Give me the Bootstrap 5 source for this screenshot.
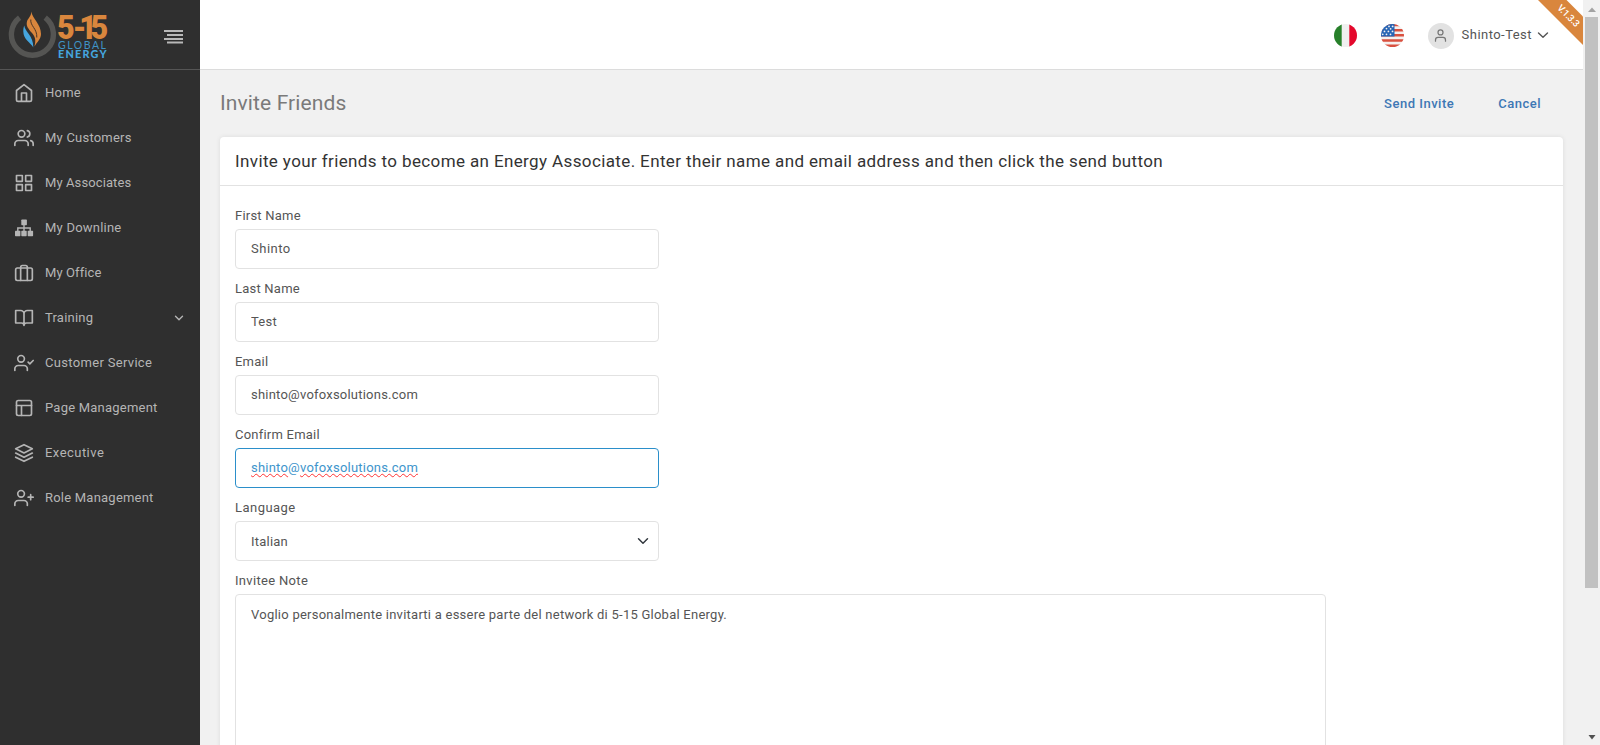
<!DOCTYPE html>
<html lang="en">
<head>
<meta charset="utf-8">
<meta name="viewport" content="width=device-width, initial-scale=1">
<title>Invite Friends</title>
<link href="https://cdn.jsdelivr.net/npm/bootstrap@5.3.0/dist/css/bootstrap.min.css" rel="stylesheet">
<script src="https://cdn.jsdelivr.net/npm/bootstrap@5.3.0/dist/js/bootstrap.bundle.min.js"></script>
<style>
body{height:745px;overflow:hidden;background:#f1f1f1;font-family:Roboto,"Open Sans",sans-serif;font-size:13px;line-height:20px;color:#555;letter-spacing:.22px}
.ls-1{letter-spacing:.1px}
.ls-3{letter-spacing:.32px}
.ls-5{letter-spacing:.46px}
.ic{fill:none;stroke:currentColor;stroke-width:2;stroke-linecap:round;stroke-linejoin:round;flex:none}
.ic-thin{stroke-width:1.4}

/* sidebar */
.sidebar{width:200px;background:#2f2f2f}
.brand-bar{height:70px;border-bottom:1px solid #555;padding:5px 16px 0 8px;color:#b8b8b8}
.burger{margin-top:20px}
.side-link{height:45px;padding:0 15px 0 14px;color:#b5b5b5;gap:11px}
.side-link:hover{color:#fff}

/* top bar */
.topbar{height:70px;background:#fff;border-bottom:1px solid #dcdcdc;padding-right:33px}
.flag,.avatar-dot{margin-top:2px}
.avatar-dot{width:26px;height:26px;background:#e2e2e2;color:#777}
.ribbon{right:0;top:0;display:block}

/* page */
.page-head{height:67px;padding:0 42px 0 20px}
.page-name{font-size:21px;line-height:26px;color:#7a7a7a;letter-spacing:.12px;font-weight:400;padding-bottom:2px}
.act{color:#3e78b5;font-weight:500;letter-spacing:.5px;padding:0;font-size:13px;border:0}
.act-group{gap:44px}
.panel{border:0;border-radius:4px 4px 0 0;box-shadow:0 0 5px rgba(0,0,0,.09);margin:0 20px}
.panel-title{height:49px;border-bottom:1px solid #e2e2e2;padding:1px 15px 0;font-size:17px;color:#333;letter-spacing:.38px;font-weight:400}
.panel-form{padding:20px 15px}
.field{width:424px;height:73px}
.form-label{display:block;height:20px;margin:0 0 3px;line-height:20px}
.form-control,.form-select{font-size:13px;line-height:20px;height:40px;border:1px solid #e2e2e2;border-radius:4px;padding:8px 15px 10px;color:#555;box-shadow:none;letter-spacing:inherit}
.form-select{background-position:right 9px center;background-size:12px 12px;padding:10px 15px 8px}
.form-control.wide{letter-spacing:.5px}
.field-live,.field-live:focus{border-color:#2b8fca;color:#3e95cc;padding-top:9px}
.typo{text-decoration:underline wavy #f33;text-decoration-thickness:1px;text-underline-offset:1px;text-decoration-skip-ink:none}
.form-control.note{width:1091px;height:300px;resize:none;padding-top:10px;letter-spacing:.245px}

/* scroll bar */
.scroller{width:17px;background:#f1f1f1;padding:7px 0 5px}
.thumb{height:571px;width:13px;background:#c1c1c1;margin:5px 0 auto}
</style>
</head>
<body>
<div class="d-flex w-100 h-100">

<aside class="sidebar d-flex flex-column flex-shrink-0">
  <div class="brand-bar d-flex justify-content-between align-items-start">
    <svg width="106" height="58" viewBox="8 5 106 58">
      <path d="M19.6 17.6A21 21 0 1 0 45.2 17.6" fill="none" stroke="#555553" stroke-width="5.4"/>
      <path d="M31.3 11.5C32.5 19 41 24 41 34C41 39 37 42 34.5 46.5C36 40 35.5 37.5 32 33C28 28.5 26.3 26 26.8 22.5C27.3 18.500 31.3 17 31.3 11.5Z" fill="#d9863d"/>
      <path d="M24.2 25.5C25 32 33.5 35.5 33.3 47.5C31 43 23.3 39.5 23.3 31.5C23.3 29 23.5 27.5 24.2 25.5Z" fill="#45a5de"/>
      <path d="M30.8 19.5C30 26 37.3 28.5 36.8 37.5" fill="none" stroke="#4a3424" stroke-width="1"/>
      <text transform="translate(57 38.8) scale(.9 1)" x="0 17.5 24.6 37.2" y="0" font-weight="900" font-size="34" letter-spacing="0" fill="#d9863d">5-15</text>
      <text x="58" y="48.500" font-family="Lato,sans-serif" font-size="10.5" letter-spacing="0" textLength="48" fill="#3f93c6">GLOBAL</text>
      <text x="58" y="57.800" font-family="Lato,sans-serif" font-weight="900" font-size="10.8" letter-spacing="0" textLength="48.5" fill="#45a5de">ENERGY</text>
    </svg>
    <svg class="burger" width="20" height="24" viewBox="165 25 20 24" fill="currentColor"><path d="M165 30h19v2h-19zM168 34h16v2h-16zM165 38h19v2h-19zM168 41.500h16v2h-16z"/></svg>
  </div>
  <nav class="nav flex-column flex-nowrap">
    <a class="side-link d-flex align-items-center text-decoration-none" href="#"><svg class="ic" width="20" height="20" viewBox="0 0 24 24"><path d="M3 9l9-7 9 7v11a2 2 0 0 1-2 2H5a2 2 0 0 1-2-2zM9 22V12h6v10"/></svg><span>Home</span></a>
    <a class="side-link d-flex align-items-center text-decoration-none" href="#"><svg class="ic" width="20" height="20" viewBox="0 0 24 24"><path d="M17 21v-2a4 4 0 0 0-4-4H5a4 4 0 0 0-4 4v2M23 21v-2a4 4 0 0 0-3-3.870M16 3.130a4 4 0 0 1 0 7.750"/><circle cx="9" cy="7" r="4"/></svg><span>My Customers</span></a>
    <a class="side-link d-flex align-items-center text-decoration-none" href="#"><svg class="ic" width="20" height="20" viewBox="0 0 24 24"><path d="M3 3h7v7H3zM14 3h7v7h-7zM14 14h7v7h-7zM3 14h7v7H3z"/></svg><span class="ls-1">My Associates</span></a>
    <a class="side-link d-flex align-items-center text-decoration-none" href="#"><svg width="20" height="20" viewBox="0 0 20 20" fill="currentColor"><path d="M9.300 5h1.400v10H9.300zM3.100 9.300h13.800v1.400H3.100zM3.100 9.300h1.400V14H3.100zM15.500 9.300h1.400V14h-1.400z"/><rect x="7.300" y="1.500" width="5.600" height="5.700" rx=".7"/><rect x="1" y="12.800" width="5.400" height="5.400" rx=".7"/><rect x="7.300" y="12.800" width="5.400" height="5.400" rx=".7"/><rect x="13.700" y="12.800" width="5.400" height="5.400" rx=".7"/></svg><span>My Downline</span></a>
    <a class="side-link d-flex align-items-center text-decoration-none" href="#"><svg class="ic" width="20" height="20" viewBox="0 0 24 24"><rect x="2" y="6" width="20" height="15" rx="2"/><path d="M16 21V5a2 2 0 0 0-2-2h-4a2 2 0 0 0-2 2v16"/></svg><span class="ls-1">My Office</span></a>
    <a class="side-link d-flex align-items-center text-decoration-none" href="#"><svg class="ic" width="20" height="20" viewBox="0 0 24 24"><path d="M2 3h6a4 4 0 0 1 4 4v14a3 3 0 0 0-3-3H2zM22 3h-6a4 4 0 0 0-4 4v14a3 3 0 0 1 3-3h7z"/></svg><span>Training</span><svg class="ic ic-thin ms-auto" width="12" height="12" viewBox="0 0 12 12"><path d="M2.500 4.200L6 7.700l3.500-3.500"/></svg></a>
    <a class="side-link d-flex align-items-center text-decoration-none" href="#"><svg class="ic" width="20" height="20" viewBox="0 0 24 24"><path d="M16 21v-2a4 4 0 0 0-4-4H5a4 4 0 0 0-4 4v2M17 11l2 2 4-4"/><circle cx="8.500" cy="7" r="4"/></svg><span class="ls-3">Customer Service</span></a>
    <a class="side-link d-flex align-items-center text-decoration-none" href="#"><svg class="ic" width="20" height="20" viewBox="0 0 24 24"><rect x="3" y="3" width="18" height="18" rx="2"/><path d="M3 9h18M9 21V9"/></svg><span>Page Management</span></a>
    <a class="side-link d-flex align-items-center text-decoration-none" href="#"><svg class="ic" width="20" height="20" viewBox="0 0 24 24"><path d="M12 2L2 7l10 5 10-5zM2 17l10 5 10-5M2 12l10 5 10-5"/></svg><span class="ls-5">Executive</span></a>
    <a class="side-link d-flex align-items-center text-decoration-none" href="#"><svg class="ic" width="20" height="20" viewBox="0 0 24 24"><path d="M16 21v-2a4 4 0 0 0-4-4H5a4 4 0 0 0-4 4v2M20 8v6M23 11h-6"/><circle cx="8.500" cy="7" r="4"/></svg><span>Role Management</span></a>
  </nav>
</aside>

<main class="flex-grow-1 d-flex flex-column position-relative overflow-hidden">
  <header class="topbar d-flex align-items-center justify-content-end flex-shrink-0">
    <svg class="flag me-4" width="23" height="23" viewBox="0 0 23 23"><defs><clipPath id="disc"><circle cx="11.500" cy="11.500" r="11.500"/></clipPath></defs><g clip-path="url(#disc)"><path fill="#f0f0f0" d="M0 0h23v23H0z"/><path fill="#27802a" d="M0 0h7.700v23H0z"/><path fill="#e4082c" d="M15.300 0H23v23h-7.700z"/></g></svg>
    <svg class="flag me-4" width="23" height="23" viewBox="0 0 23 23"><g clip-path="url(#disc)"><path fill="#f5f0ef" d="M0 0h23v23H0z"/><path fill="#d9503f" d="M0 0h23v2.300H0zM0 5h23v2.400H0zM0 10h23v2.500H0zM0 15.200h23v2.500H0zM0 20.400h23V23H0z"/><path fill="#2765b5" d="M0 0h13.500v12.400H0z"/><g fill="#f5f0ef"><circle cx="8" cy="2.400" r=".9"/><circle cx="11.600" cy="2.400" r=".9"/><circle cx="5.500" cy="4.600" r=".9"/><circle cx="9.600" cy="4.800" r=".9"/><circle cx="3.500" cy="7.400" r=".9"/><circle cx="7.400" cy="7.400" r=".9"/><circle cx="11.500" cy="7.400" r=".9"/><circle cx="1.700" cy="10.300" r=".9"/><circle cx="5.500" cy="10.300" r=".9"/><circle cx="9.500" cy="10.300" r=".9"/></g></g></svg>
    <div class="avatar-dot rounded-circle d-flex align-items-center justify-content-center"><svg class="ic" width="15" height="15" viewBox="0 0 24 24"><path d="M20 21v-2a4 4 0 0 0-4-4H8a4 4 0 0 0-4 4v2"/><circle cx="12" cy="7" r="4"/></svg></div>
    <span class="ls-5 ms-2">Shinto-Test</span>
    <svg class="ic ic-thin ms-1" width="14" height="14" viewBox="0 0 14 14"><path d="M2.500 5L7 9.300 11.500 5"/></svg>
    <svg class="ribbon position-absolute" width="46" height="46" viewBox="0 0 46 46"><path fill="#d9863d" d="M1 0h28.500L46 16.500V45z"/><text transform="translate(29.300 18) rotate(45)" text-anchor="middle" font-size="9.500" font-weight="500" fill="#fff" letter-spacing="0" textLength="27">V.1.3.3</text></svg>
  </header>

  <div class="page-head d-flex align-items-center justify-content-between flex-shrink-0">
    <h1 class="page-name m-0">Invite Friends</h1>
    <div class="act-group d-flex"><button class="btn act">Send Invite</button><button class="btn act">Cancel</button></div>
  </div>

  <section class="card panel flex-grow-1">
    <h2 class="panel-title d-flex align-items-center m-0 flex-shrink-0">Invite your friends to become an Energy Associate. Enter their name and email address and then click the send button</h2>
    <form class="panel-form">
      <div class="field"><label class="form-label">First Name</label><input class="form-control wide" value="Shinto"></div>
      <div class="field"><label class="form-label">Last Name</label><input class="form-control" value="Test"></div>
      <div class="field"><label class="form-label">Email</label><input class="form-control" value="shinto@vofoxsolutions.com"></div>
      <div class="field"><label class="form-label">Confirm Email</label><div class="form-control field-live"><span class="typo">shinto</span>@<span class="typo">vofoxsolutions.com</span></div></div>
      <div class="field"><label class="form-label ls-5">Language</label><select class="form-select"><option>Italian</option></select></div>
      <div><label class="form-label ls-3">Invitee Note</label><textarea class="form-control note">Voglio personalmente invitarti a essere parte del network di 5-15 Global Energy.</textarea></div>
    </form>
  </section>
</main>

<div class="scroller d-flex flex-column align-items-center flex-shrink-0">
  <svg width="8" height="5" viewBox="0 0 8 5"><path d="M0 5L4 .5 8 5z" fill="#a3a3a3"/></svg>
  <div class="thumb"></div>
  <svg width="8" height="5" viewBox="0 0 8 5"><path d="M.5 0L4 4.500 7.500 0z" fill="#505050"/></svg>
</div>

</div>
</body>
</html>
